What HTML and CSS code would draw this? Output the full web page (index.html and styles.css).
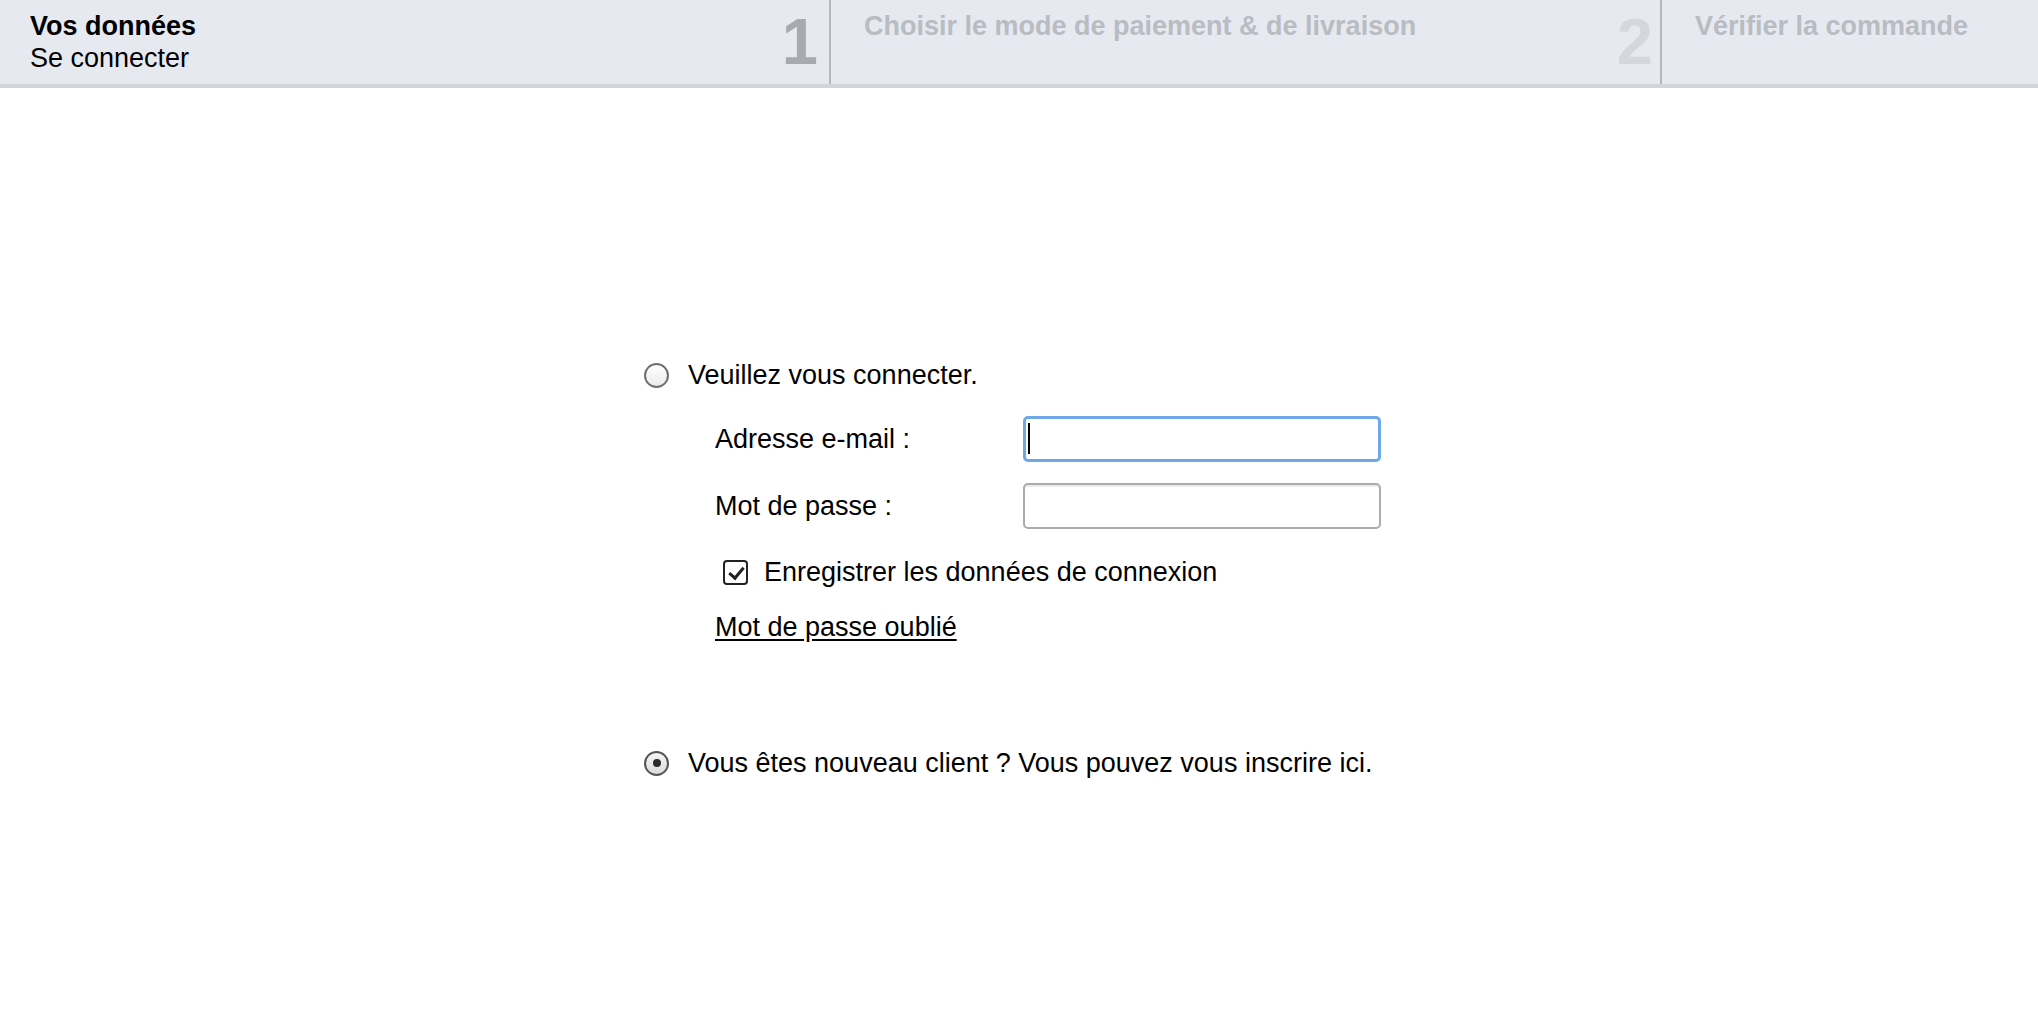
FILE: index.html
```html
<!DOCTYPE html>
<html lang="fr">
<head>
  <meta charset="UTF-8">
  <meta name="viewport" content="width=device-width, initial-scale=1.0">
  <title>Se connecter</title>
  <link rel="stylesheet" href="styles.css">
</head>
<body>
  <!-- Checkout steps -->
  <div class="steps">
    <div class="step current">
      <div class="step-text">
        <div class="step-title">Vos données</div>
        <div class="step-sub">Se connecter</div>
      </div>
      <div class="step-num">1</div>
    </div>
    <div class="step">
      <div class="step-text">
        <div class="step-title">Choisir le mode de paiement &amp; de livraison</div>
      </div>
      <div class="step-num">2</div>
    </div>
    <div class="step last">
      <div class="step-text">
        <div class="step-title">Vérifier la commande</div>
      </div>
    </div>
  </div>

  <!-- Login form -->
  <div class="login">
    <label class="option">
      <input type="radio" name="mode" class="radio">
      <span>Veuillez vous connecter.</span>
    </label>

    <div class="fields">
      <div class="field-row first">
        <label class="field-label" for="email">Adresse e-mail :</label>
        <div class="input-wrap">
          <input type="text" id="email" class="text-input focused">
          <span class="caret"></span>
        </div>
      </div>
      <div class="field-row">
        <label class="field-label" for="pass">Mot de passe :</label>
        <div class="input-wrap">
          <input type="password" id="pass" class="text-input">
        </div>
      </div>
      <label class="remember">
        <input type="checkbox" class="check" checked>
        <span>Enregistrer les données de connexion</span>
      </label>
      <a href="#" class="forgot">Mot de passe oublié</a>
    </div>

    <label class="option new-client">
      <input type="radio" name="mode" class="radio" checked>
      <span>Vous êtes nouveau client ? Vous pouvez vous inscrire ici.</span>
    </label>
  </div>
</body>
</html>
```

FILE: styles.css
```css
/* Base */
body {
  margin: 0;
  font-family: "Liberation Sans", Arial, Helvetica, sans-serif;
  font-size: 27px;
  color: #000;
  background: #fff;
}

/* Steps bar */
.steps {
  display: flex;
  background: #e6e9f0;
  border-bottom: 4px solid #d1d4da;
}

.step {
  width: 829px;
  height: 84px;
  display: flex;
  justify-content: space-between;
  border-right: 2px solid #b5b7bd;
}

.step.last {
  flex: 1;
  border-right: none;
}

.step-text {
  padding: 10px 0 0 33px;
  line-height: 32px;
}

.step.current .step-text {
  padding-left: 30px;
}

.step-title {
  font-weight: bold;
  color: #b9bcc2;
}

.step.current .step-title {
  color: #000;
}

.step-sub {
  color: #000;
}

.step-num {
  padding: 10px 7px 0 0;
  font-size: 65px;
  line-height: 64px;
  font-weight: bold;
  color: #d4d7dd;
}

.step.current .step-num {
  color: #a8aaaf;
  padding-right: 11px;
}

/* Login block */
.login {
  width: 750px;
  margin: 272px auto 0;
}

.option {
  display: flex;
  align-items: center;
  gap: 19px;
  height: 30px;
}

.radio {
  appearance: none;
  -webkit-appearance: none;
  margin: 0;
  width: 25px;
  height: 25px;
  border-radius: 50%;
  border: 2px solid #6e6e6e;
  background: linear-gradient(#ffffff, #ebebeb);
  box-sizing: border-box;
  position: relative;
  flex-shrink: 0;
}

.radio:checked {
  border-color: #555;
  background: linear-gradient(#f4f4f4, #dcdcdc);
}

.radio:checked::after {
  content: "";
  position: absolute;
  left: 6.5px;
  top: 6.5px;
  width: 8px;
  height: 8px;
  border-radius: 50%;
  background: #2a2a2a;
}

.fields {
  padding-left: 71px;
  display: flex;
  flex-direction: column;
  align-items: flex-start;
}

.field-row {
  display: flex;
  align-items: center;
  margin-top: 21px;
}

.field-row.first {
  margin-top: 26px;
}

.field-label {
  width: 308px;
}

.input-wrap {
  position: relative;
}

.text-input {
  display: block;
  width: 358px;
  height: 46px;
  box-sizing: border-box;
  border: 2px solid #ababab;
  border-radius: 5px;
  box-shadow: inset 0 2px 0 #ececec;
  background: #fff;
  font: inherit;
  padding: 0 6px;
  outline: none;
}

.text-input.focused {
  border: 3px solid #6ea7ea;
  box-shadow: none;
}

/* fake text cursor in the focused field */
.caret {
  position: absolute;
  left: 5px;
  top: 7px;
  width: 2px;
  height: 31px;
  background: #000;
}

.remember {
  display: flex;
  align-items: center;
  gap: 16px;
  height: 30px;
  margin: 28px 0 0 8px;
}

.check {
  appearance: none;
  -webkit-appearance: none;
  margin: 0;
  width: 25px;
  height: 25px;
  box-sizing: border-box;
  border: 2px solid #222;
  border-radius: 4px;
  background: #fff;
  position: relative;
}

.check:checked::after {
  content: "";
  position: absolute;
  left: 7px;
  top: 2px;
  width: 6px;
  height: 12px;
  border-right: 3px solid #222;
  border-bottom: 3px solid #222;
  transform: rotate(40deg);
}

.forgot {
  margin-top: 25px;
  line-height: 30px;
  color: #000;
  text-decoration: underline;
  text-underline-offset: 3px;
}

.new-client {
  margin-top: 106px;
}
```
